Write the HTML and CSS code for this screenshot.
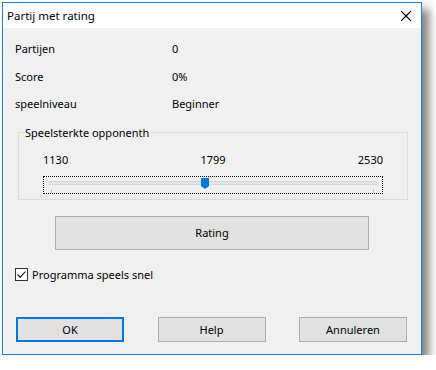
FILE: index.html
```html
<!DOCTYPE html>
<html lang="nl">

<head>
    <meta charset="UTF-8">
    <meta name="viewport" content="width=device-width, initial-scale=1.0">
    <title>Partij met rating</title>
    <link rel="stylesheet" href="styles.css">
</head>

<body>
    <div class="dialog">
        <div class="titlebar">
            <span class="caption">Partij met rating</span>
            <span class="close">
                <svg width="12" height="12" viewBox="0 0 12 12">
                    <path d="M1 1 L11 11 M11 1 L1 11" stroke="#000" stroke-width="1.1" fill="none" />
                </svg>
            </span>
        </div>
        <div class="content">
            <div class="info">
                <span>Partijen</span><span>0</span>
                <span>Score</span><span>0%</span>
                <span>speelniveau</span><span>Beginner</span>
            </div>

            <fieldset class="group">
                <legend>Speelsterkte opponenth</legend>
                <div class="range-labels">
                    <span>1130</span>
                    <span>1799</span>
                    <span>2530</span>
                </div>
                <div class="slider">
                    <div class="track"></div>
                    <div class="ticks"><i></i><i></i></div>
                    <svg class="thumb" style="left: 157px" width="8" height="11" viewBox="0 0 8 11">
                        <path d="M0 0 H8 V8 L4 11 L0 8 Z" fill="#0078d7" />
                    </svg>
                </div>
            </fieldset>

            <button class="btn rating">Rating</button>

            <label class="check">
                <span class="box">
                    <svg width="11" height="11" viewBox="0 0 11 11">
                        <path d="M1.5 5.5 L4.2 8.2 L9.5 2.5" stroke="#000" stroke-width="1.1" fill="none" />
                    </svg>
                </span>
                Programma speels snel
            </label>

            <div class="actions">
                <button class="btn default">OK</button>
                <button class="btn">Help</button>
                <button class="btn">Annuleren</button>
            </div>
        </div>
    </div>
</body>

</html>
```

FILE: styles.css
```css
body {
    margin: 0;
    background: #ffffff;
    font-family: "Noto Sans", "Open Sans", sans-serif;
    font-size: 11px;
    color: #000;
}

.dialog {
    margin: 2px 0 0 2px;
    width: 418px;
    height: 351px;
    border: 1px solid #1a83d8;
    background: #f0f0f0;
    box-shadow: 7px 7px 9px rgba(0, 0, 0, 0.5);
    display: flex;
    flex-direction: column;
}

.titlebar {
    height: 25px;
    background: #fff;
    display: flex;
    align-items: center;
    justify-content: space-between;
    padding: 0 8px 0 4px;
    font-size: 11.5px;
}

.caption {
    line-height: 16px;
    margin-top: 1px;
}

.close {
    display: flex;
    margin-right: 1px;
}

.content {
    flex: 1;
    padding-top: 7px;
}

.info {
    display: grid;
    grid-template-columns: 157px auto;
    grid-auto-rows: 27.5px;
    align-items: center;
    margin-left: 12px;
}

.group {
    margin: 7px 13px 0 15px;
    padding: 11px 24px 5px 24px;
    border: 1px solid #dcdcdc;
    min-width: 0;
}

.group legend {
    padding: 0 1px;
    margin-left: -19px;
    line-height: 16px;
}

.range-labels {
    display: flex;
    justify-content: space-between;
    line-height: 16px;
    margin-bottom: 8px;
}

.slider {
    position: relative;
    height: 16px;
    border: 1px dotted #000;
}

.track {
    margin: 4px 5px 0 5px;
    height: 2px;
    background: #e7e7e7;
    border: 1px solid #d6d6d6;
}

.ticks {
    display: flex;
    justify-content: space-between;
    margin: 4px 8px 0 7px;
}

.ticks i {
    width: 1px;
    height: 4px;
    background: #c4c4c4;
}

.thumb {
    position: absolute;
    top: 1px;
}

.btn {
    font-family: inherit;
    font-size: 11px;
    color: #000;
    background: #e1e1e1;
    border: 1px solid #adadad;
    padding: 0;
    width: 108px;
    height: 25px;
}

.rating {
    display: block;
    margin: 16px 0 0 52px;
    width: 314px;
    height: 34px;
}

.check {
    display: flex;
    align-items: center;
    gap: 4px;
    margin: 17px 0 0 12px;
    line-height: 16px;
}

.box {
    width: 11px;
    height: 11px;
    border: 1px solid #333;
    background: #fff;
    display: flex;
}

.actions {
    display: flex;
    justify-content: space-between;
    margin: 34px 14px 0 13px;
}

.default {
    border: 2px solid #0078d7;
}
```
